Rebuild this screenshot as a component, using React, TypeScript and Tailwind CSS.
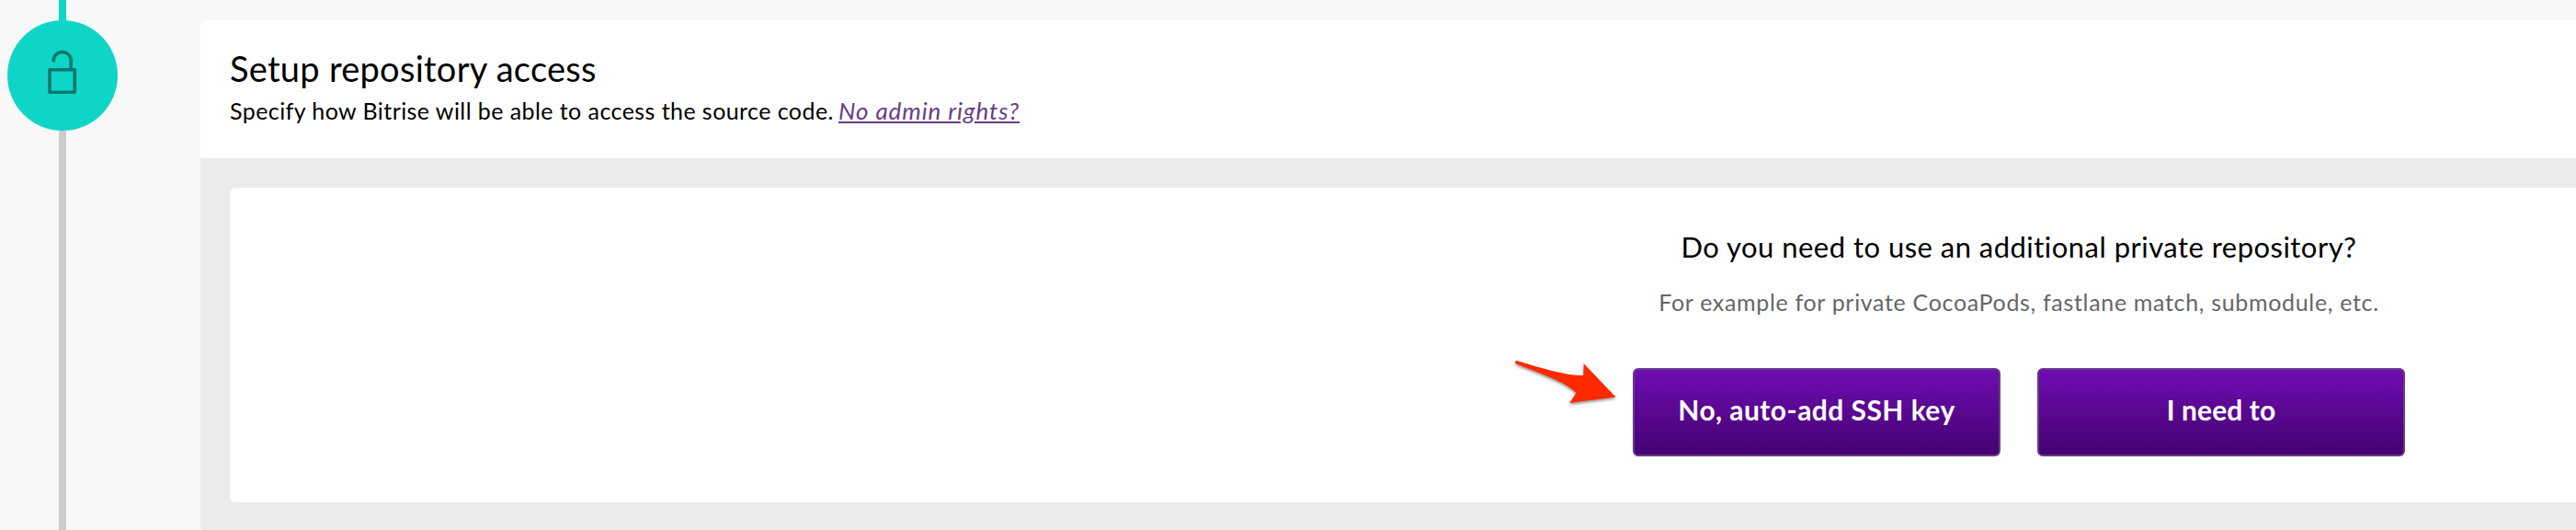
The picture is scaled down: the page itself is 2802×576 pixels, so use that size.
import type { ReactNode } from "react";

function UnlockIcon() {
  return (
    <svg className="h-14 w-8" viewBox="0 0 32 56" fill="none" stroke="#06796f" strokeWidth="3.6" strokeLinecap="round" strokeLinejoin="round">
      <rect x="2" y="21.8" width="27.3" height="24.4" />
      <path d="M6.2 12 A9.5 9.5 0 0 1 25.2 12 V21.8" />
    </svg>
  );
}

function Pointer() {
  return (
    <svg
      className="absolute top-[-12px] -left-[132px] h-[60px] w-[120px] drop-shadow-[0_2px_1.5px_rgba(0,0,0,0.4)]"
      viewBox="0 0 120 60"
      fill="#ff2a00"
    >
      <path d="M6 4 C33 12 57 20 78.3 20 L78.6 7 L113.5 43.5 L63.2 50 L70.5 39 C58 27 34 19 5.2 7.6 C3.4 6.5 4.2 3.5 6 4 Z" />
    </svg>
  );
}

function ActionButton({ className, children }: { className: string; children: ReactNode }) {
  return (
    <button
      className={`flex h-24 w-[400px] items-center justify-center rounded-md border-2 border-[#683c85] bg-linear-to-b from-[#6f0db2] to-[#440371] pb-[7px] text-[30px] leading-9 font-bold text-white ${className}`}
    >
      {children}
    </button>
  );
}

export default function App() {
  return (
    <div className="flex h-[576px] w-full overflow-hidden bg-[#f8f8f8] font-['Lato','Noto_Sans',sans-serif] text-black">
      <div className="flex w-[218px] shrink-0 flex-col items-start pl-2">
        <div className="ml-14 h-[22px] w-2 bg-[#0fd5c7]" />
        <div className="flex size-[120px] items-center justify-center rounded-full bg-[#0fd5c7]">
          <UnlockIcon />
        </div>
        <div className="ml-14 w-2 grow bg-[#cbcbcb]" />
      </div>

      <section className="mt-[22px] flex h-[556px] w-[3956px] shrink-0 flex-col overflow-hidden rounded-md bg-[#ebebeb]">
        <header className="h-[150px] shrink-0 bg-white px-8 pt-7">
          <h2 className="text-[38px] leading-[48px] tracking-[0.27px]">Setup repository access</h2>
          <p className="mt-1.5 flex text-[25px] leading-8 tracking-[0.43px]">
            <span className="w-[662px] whitespace-nowrap">Specify how Bitrise will be able to access the source code.</span>
            <a href="#" className="text-[26px] tracking-[0.92px] text-[#683c85] italic underline decoration-2 underline-offset-2">
              No admin rights?
            </a>
          </p>
        </header>

        <div className="mx-8 mt-8 flex h-[342px] flex-col items-center rounded-md bg-white pt-11">
          <h3 className="text-[31px] leading-10 tracking-[0.47px]">Do you need to use an additional private repository?</h3>
          <p className="mt-6 text-[25px] leading-8 tracking-[0.67px] text-[#666666]">
            For example for private CocoaPods, fastlane match, submodule, etc.
          </p>
          <div className="relative mt-14 flex gap-10">
            <ActionButton className="tracking-[0.45px]">No, auto-add SSH key</ActionButton>
            <ActionButton className="tracking-[0.1px]">I need to</ActionButton>
            <Pointer />
          </div>
        </div>
      </section>
    </div>
  );
}
